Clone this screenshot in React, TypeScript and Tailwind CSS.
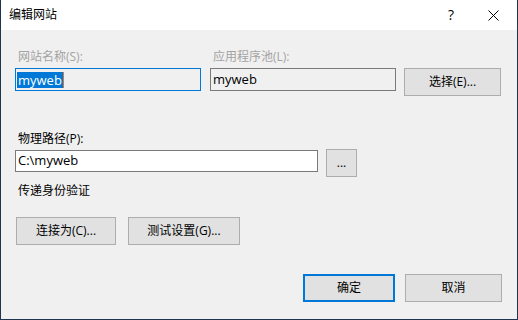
export default function App() {
  const font = { fontFamily: '"Open Sans", "Noto Sans", "Noto Sans CJK SC", sans-serif' };
  return (
    <div
      className="w-[518px] h-[320px] flex flex-col border-l border-r border-b border-[#1e3550] bg-[#f0f0f0] text-[12px] text-black overflow-hidden"
      style={font}
    >
      {/* title bar */}
      <div className="h-[30px] shrink-0 bg-white flex items-center">
        <span className="ml-[8px] text-[12px]">编辑网站</span>
        <span className="ml-auto mr-[34px] text-[14px] leading-none">?</span>
        <svg width="11" height="11" viewBox="0 0 11 11" className="mr-[18px]">
          <path d="M0.5 0.5 L10.5 10.5 M10.5 0.5 L0.5 10.5" stroke="#000" strokeWidth="1" />
        </svg>
      </div>

      {/* body */}
      <div className="flex-1 flex flex-col pl-[14px] pr-[15px] pt-[19px]">
        <div className="flex items-start">
          <div className="w-[186px] flex flex-col">
            <label className="h-[16px] leading-[16px] pl-[3px] text-[#a3a3a3]">网站名称(S):</label>
            <div className="mt-[3px] h-[23px] border border-[#0078d7] bg-[#f0f0f0] flex items-center pl-[1px]">
              <span className="bg-[#0078d7] text-white text-[13px] leading-[16px] px-[1px] border-r border-[#d87a2a]">myweb</span>
            </div>
          </div>
          <div className="ml-[9px] w-[186px] flex flex-col">
            <label className="h-[16px] leading-[16px] pl-[3px] text-[#a3a3a3]">应用程序池(L):</label>
            <div className="mt-[3px] h-[23px] border border-[#7a7a7a] bg-[#f0f0f0] flex items-center pl-[2px] text-[13px]">
              myweb
            </div>
          </div>
          <button className="ml-[8px] mt-[19px] w-[97px] h-[28px] border border-[#adadad] bg-[#e1e1e1]">
            选择(E)...
          </button>
        </div>

        <label className="mt-[35px] h-[16px] leading-[16px] pl-[3px]">物理路径(P):</label>
        <div className="mt-[3px] flex items-start">
          <div className="w-[303px] h-[22px] border border-[#7a7a7a] bg-white flex items-center pl-[2px] text-[13px]">
            C:\myweb
          </div>
          <button className="ml-[8px] -mt-[1px] w-[31px] h-[28px] border border-[#adadad] bg-[#e1e1e1] leading-none">
            ...
          </button>
        </div>

        <div className="mt-[6px] h-[16px] leading-[16px] pl-[3px]">传递身份验证</div>

        <div className="mt-[18px] ml-[1px] flex gap-[12px]">
          <button className="w-[100px] h-[28px] border border-[#adadad] bg-[#e1e1e1]">连接为(C)...</button>
          <button className="w-[112px] h-[28px] border border-[#adadad] bg-[#e1e1e1]">测试设置(G)...</button>
        </div>

        <div className="mt-[29px] flex justify-end gap-[10px]">
          <button className="w-[92px] h-[28px] border-2 border-[#0078d7] bg-[#e1e1e1]">确定</button>
          <button className="w-[97px] h-[28px] border border-[#adadad] bg-[#e1e1e1]">取消</button>
        </div>
      </div>
    </div>
  );
}
